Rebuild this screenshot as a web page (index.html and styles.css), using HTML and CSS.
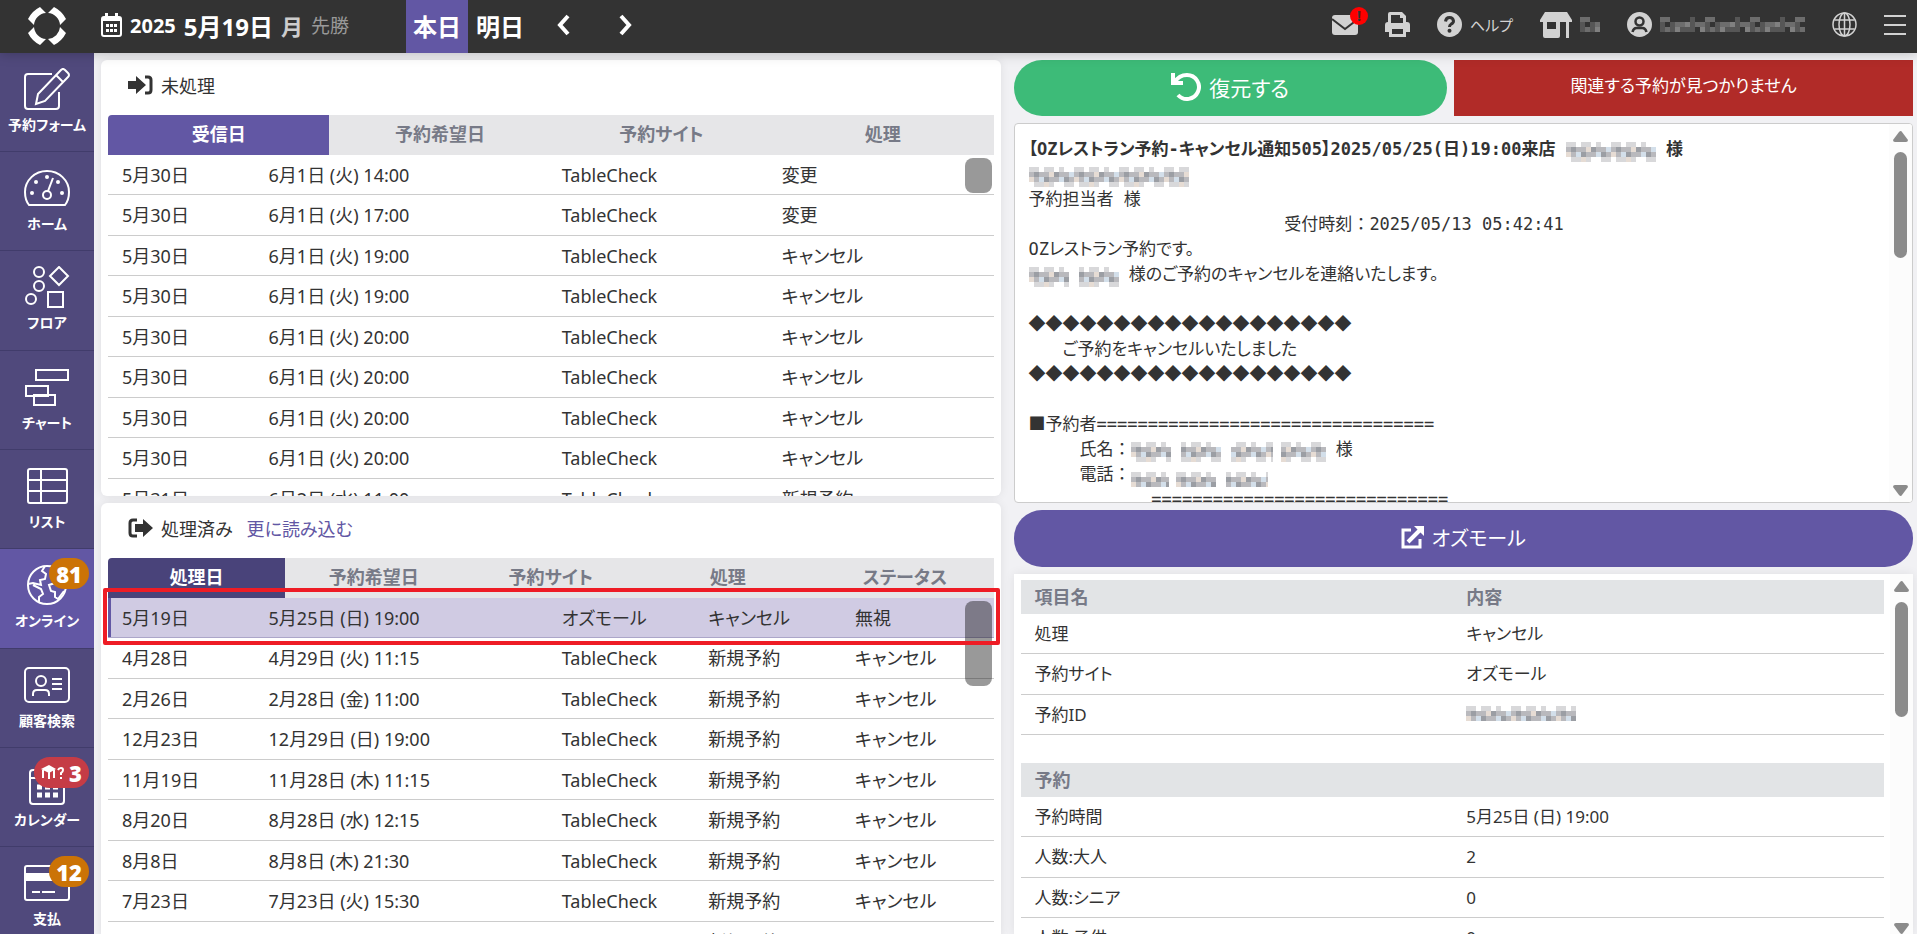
FILE: index.html
```
<!DOCTYPE html>
<html lang="ja">
<head>
  <meta charset="UTF-8">
  <meta name="viewport" content="width=device-width, initial-scale=1.0">
  <title>オンライン予約</title>
  <link rel="stylesheet" href="styles.css">
</head>
<body>
  <!-- Паттерны для скрытых имён -->
  <svg class="defs" width="0" height="0" aria-hidden="true">
    <defs>
      <pattern id="mosaicLight" width="45" height="20" patternUnits="userSpaceOnUse">
        <g fill="#d8d8da"><path d="M0 0h10v5H0zM15 0h10v5H15zM30 0h5v5h-5zM5 15h10v5H5zM20 15h5v5h-5zM35 15h10v5H35z"/></g>
        <g fill="#b9b9bd"><path d="M0 5h5v5H0zM10 5h10v5H10zM30 5h10v5H30zM5 10h5v5H5zM20 10h10v5H20zM40 10h5v5h-5z"/></g>
        <g fill="#9b9ea4"><path d="M5 5h5v5H5zM15 10h5v5h-5zM35 10h5v5h-5zM25 5h5v5h-5z"/></g>
        <path fill="#e6dcd4" d="M0 10h5v5H0zM20 5h5v5h-5zM15 15h5v5h-5z"/>
        <path fill="#d3dfea" d="M10 10h5v5h-5zM30 10h5v5h-5zM40 5h5v5h-5z"/>
      </pattern>
      <pattern id="mosaicDark" width="45" height="20" patternUnits="userSpaceOnUse">
        <path fill="#6d6d6d" d="M0 0h10v5H0zM15 5h10v5H15zM35 5h10v5H35zM5 10h5v5H5z"/>
        <path fill="#565656" d="M0 5h5v10H0zM10 5h5v10h-5zM20 10h15v5H20zM30 0h5v10h-5z"/>
        <path fill="#808080" d="M15 10h5v5h-5zM25 5h5v5h-5zM40 10h5v5h-5z"/>
      </pattern>
    </defs>
  </svg>

  <header class="topbar">
    <a class="logo" href="#" aria-label="TableCheck">
      <svg width="38" height="38" viewBox="0 0 38 38" fill="#fff">
        <path d="M12 0L18 6A13 13 0 0 0 6 18L0 12Q4 4 12 0Z"/>
        <path d="M26 0L20 6A13 13 0 0 1 32 18L38 12Q34 4 26 0Z"/>
        <path d="M12 38L18 32A13 13 0 0 1 6 20L0 26Q4 34 12 38Z"/>
        <path d="M26 38L20 32A13 13 0 0 0 32 20L38 26Q34 34 26 38Z"/>
      </svg>
    </a>
    <button class="date">
      <svg width="21" height="24" viewBox="0 0 21 24" fill="none" stroke="#fff" stroke-width="2">
        <rect x="1" y="4" width="19" height="19" rx="2"/>
        <path d="M1 6h19" stroke-width="4"/><path d="M5.500 0v5M15.500 0v5" stroke-width="3"/>
        <path d="M5 12.500h11M5 17.500h11" stroke-width="3" stroke-dasharray="3 1"/>
      </svg>
      <span class="year">2025</span>
      <span class="day">5月19日</span>
      <span class="weekday">月</span>
      <span class="rokuyo">先勝</span>
    </button>
    <nav class="day-nav">
      <button class="day-button active">本日</button>
      <button class="day-button">明日</button>
      <button class="arrow" aria-label="前の日">
        <svg width="14" height="22" viewBox="0 0 14 22" fill="none" stroke="#fff" stroke-width="4"><path d="M12 2L4 11l8 9"/></svg>
      </button>
      <button class="arrow" aria-label="次の日">
        <svg width="14" height="22" viewBox="0 0 14 22" fill="none" stroke="#fff" stroke-width="4"><path d="M2 2l8 9-8 9"/></svg>
      </button>
    </nav>
    <div class="tools">
      <a href="#" class="mail" aria-label="メール">
        <svg width="26" height="20" viewBox="0 0 26 20"><rect width="26" height="20" rx="3" fill="#d2d2d2"/><path d="M0 4l13 10L26 4" fill="none" stroke="#333" stroke-width="2"/></svg>
        <span class="alert">!</span>
      </a>
      <a href="#" aria-label="印刷">
        <svg width="25" height="25" viewBox="0 0 25 25"><path fill="#d2d2d2" d="M5 0h12l4 4v6h1q3 0 3 3v7h-4v5H4v-5H0v-7q0-3 3-3h0V2q0-2 2-2z"/><path fill="#333" d="M6 3h9v3h3v5H6zM7 17h11v5H7z"/></svg>
      </a>
      <a href="#">
        <svg width="25" height="25" viewBox="0 0 25 25"><circle cx="12.500" cy="12.500" r="12.500" fill="#d2d2d2"/><path d="M8.500 9.500q.5-4 4-4t4 3.500q0 2-2.500 3.200-1.500.8-1.500 2.800" fill="none" stroke="#333" stroke-width="3"/><circle cx="12.500" cy="18.700" r="2" fill="#333"/></svg>
        <span class="help">ヘルプ</span>
      </a>
      <a href="#" aria-label="店舗">
        <svg width="32" height="26" viewBox="0 0 32 26"><path fill="#d2d2d2" d="M5 0h22l5 8v2H0V8zM3 10h4v7h9v-7h4v14q0 2-2 2H5q-2 0-2-2zM26 10h3v16h-3z"/></svg>
        <svg width="20" height="15"><rect width="20" height="15" fill="url(#mosaicDark)"/></svg>
      </a>
      <a href="#" aria-label="アカウント">
        <svg width="25" height="25" viewBox="0 0 25 25"><circle cx="12.500" cy="12.500" r="12.500" fill="#d2d2d2"/><circle cx="12.500" cy="9.500" r="4" fill="none" stroke="#333" stroke-width="2.500"/><path d="M5.500 20q1-4 4-4h6q3 0 4 4" fill="none" stroke="#333" stroke-width="2.500"/></svg>
        <svg width="145" height="15"><rect width="145" height="15" fill="url(#mosaicDark)"/></svg>
      </a>
      <a href="#" aria-label="言語">
        <svg width="25" height="25" viewBox="0 0 25 25" fill="none" stroke="#d2d2d2" stroke-width="1.500"><circle cx="12.500" cy="12.500" r="11.500"/><ellipse cx="12.500" cy="12.500" rx="5.500" ry="11.500"/><path d="M12.500 1v23M2.500 8h20M2.500 17h20"/></svg>
      </a>
      <a href="#" aria-label="メニュー">
        <svg width="22" height="20" viewBox="0 0 22 20" stroke="#d2d2d2" stroke-width="2"><path d="M0 1h22M0 10h22M0 19h22"/></svg>
      </a>
    </div>
  </header>

  <div class="page">
    <nav class="sidebar">
      <a href="#">
        <svg width="46" height="42" viewBox="0 0 46 42" fill="none" stroke="#fff" stroke-width="2"><path d="M28 6H4Q1 6 1 9v29q0 3 3 3h28q3 0 3-3V24"/><path d="M12 36l2-10L37 2q2-2 4 0l3 3q2 2 0 4L21 33l-9 3zM32 7l7 7"/></svg>
        <span>予約フォーム</span>
      </a>
      <a href="#">
        <svg width="46" height="42" viewBox="0 0 46 42" fill="none" stroke="#fff" stroke-width="2"><path d="M5 38Q1 33 1 25a22 21 0 0 1 44 0q0 8-4 13z"/><circle cx="23" cy="28" r="4"/><path d="M24 24l5-13"/><g fill="#fff" stroke="none"><circle cx="23" cy="10" r="2"/><circle cx="12" cy="15" r="2"/><circle cx="34" cy="15" r="2"/><circle cx="8" cy="26" r="2"/><circle cx="38" cy="26" r="2"/></g></svg>
        <span>ホーム</span>
      </a>
      <a href="#">
        <svg width="46" height="42" viewBox="0 0 46 42" fill="none" stroke="#fff" stroke-width="2"><circle cx="15" cy="6" r="5"/><circle cx="15" cy="20" r="5"/><circle cx="7" cy="33" r="5"/><path d="M35 1l9 9-9 9-9-9z"/><rect x="24" y="26" width="15" height="15"/></svg>
        <span>フロア</span>
      </a>
      <a href="#">
        <svg width="46" height="42" viewBox="0 0 46 42" fill="none" stroke="#fff" stroke-width="2"><rect x="12" y="4" width="32" height="10"/><rect x="2" y="20" width="22" height="10"/><rect x="10" y="29" width="21" height="10"/></svg>
        <span>チャート</span>
      </a>
      <a href="#">
        <svg width="46" height="42" viewBox="0 0 46 42" fill="none" stroke="#fff" stroke-width="2"><rect x="4" y="4" width="39" height="34" rx="2"/><path d="M17 4v34M4 15h39M4 26h39"/></svg>
        <span>リスト</span>
      </a>
      <a href="#" class="active">
        <svg width="46" height="42" viewBox="0 0 46 42" fill="none" stroke="#fff" stroke-width="2"><circle cx="23" cy="21" r="19"/><path d="M21 2l-3 5 4 3-1 5-5 1 1 5-8-2-5 1M9 21l8 4 2 5-4 3v5M42 21l-8-3-9 3 2 6 4 1v5l3 2 6-8M31 4l-3 6 4 3 7-2"/></svg>
        <span>オンライン</span>
        <b class="count orange">81</b>
      </a>
      <a href="#">
        <svg width="46" height="42" viewBox="0 0 46 42" fill="none" stroke="#fff" stroke-width="2"><rect x="1" y="4" width="44" height="34" rx="4"/><circle cx="17" cy="17" r="5"/><path d="M9 32v-2q0-4 4-4h8q4 0 4 4v2M28 15h10M28 20h10M28 25h10"/></svg>
        <span>顧客検索</span>
      </a>
      <a href="#">
        <svg width="46" height="42" viewBox="0 0 46 42" fill="none" stroke="#fff" stroke-width="2"><rect x="6" y="7" width="34" height="34" rx="3"/><path d="M6 15h34M14 2v8M32 2v8"/><path d="M13 24h21M13 32h21" stroke-width="5" stroke-dasharray="5 3"/></svg>
        <span>カレンダー</span>
        <b class="count red"><svg width="24" height="16" viewBox="0 0 24 16"><path fill="#fff" d="M0 4l8-4 7 4-7 4zM1 5h2v8H1zM7 7h2v7H7zM12 5h2v8h-2z"/><path d="M17 5q1-2 3-2t2 2-2 3v2M20 12v2" fill="none" stroke="#fff" stroke-width="2"/></svg>3</b>
      </a>
      <a href="#">
        <svg width="46" height="42" viewBox="0 0 46 42" fill="none" stroke="#fff" stroke-width="2"><rect x="1" y="4" width="44" height="34" rx="2"/><path d="M1 15h44" stroke-width="8"/><path d="M8 30h8M18 30h13"/></svg>
        <span>支払</span>
        <b class="count orange">12</b>
      </a>
    </nav>

    <main class="content">
      <div class="lists">
        <section class="panel">
          <h2 class="panel-title">
            <svg width="25" height="20" viewBox="0 0 25 20"><path fill="#333" d="M0 6h8V1l10 9-10 9v-5H0z"/><path d="M17 2h3q3 0 3 3v10q0 3-3 3h-3" fill="none" stroke="#333" stroke-width="3"/></svg>
            未処理
          </h2>
          <table class="list pending">
            <thead>
              <tr><th class="sorted">受信日</th><th>予約希望日</th><th>予約サイト</th><th>処理</th></tr>
            </thead>
            <tbody>
              <tr><td>5月30日</td><td>6月1日 (火) 14:00</td><td>TableCheck</td><td>変更</td></tr>
              <tr><td>5月30日</td><td>6月1日 (火) 17:00</td><td>TableCheck</td><td>変更</td></tr>
              <tr><td>5月30日</td><td>6月1日 (火) 19:00</td><td>TableCheck</td><td>キャンセル</td></tr>
              <tr><td>5月30日</td><td>6月1日 (火) 19:00</td><td>TableCheck</td><td>キャンセル</td></tr>
              <tr><td>5月30日</td><td>6月1日 (火) 20:00</td><td>TableCheck</td><td>キャンセル</td></tr>
              <tr><td>5月30日</td><td>6月1日 (火) 20:00</td><td>TableCheck</td><td>キャンセル</td></tr>
              <tr><td>5月30日</td><td>6月1日 (火) 20:00</td><td>TableCheck</td><td>キャンセル</td></tr>
              <tr><td>5月30日</td><td>6月1日 (火) 20:00</td><td>TableCheck</td><td>キャンセル</td></tr>
              <tr><td>5月31日</td><td>6月2日 (水) 11:00</td><td>TableCheck</td><td>新規予約</td></tr>
            </tbody>
          </table>
          <div class="list-thumb short"></div>
        </section>

        <section class="panel">
          <h2 class="panel-title">
            <svg width="25" height="20" viewBox="0 0 25 20"><path fill="#333" d="M7 6h8V1l10 9-10 9v-5H7z"/><path d="M9 2H5Q2 2 2 5v10q0 3 3 3h4" fill="none" stroke="#333" stroke-width="3"/></svg>
            処理済み
            <a href="#">更に読み込む</a>
          </h2>
          <table class="list processed">
            <thead>
              <tr><th class="sorted">処理日</th><th>予約希望日</th><th>予約サイト</th><th>処理</th><th>ステータス</th></tr>
            </thead>
            <tbody>
              <tr class="selected"><td>5月19日</td><td>5月25日 (日) 19:00</td><td>オズモール</td><td>キャンセル</td><td>無視</td></tr>
              <tr><td>4月28日</td><td>4月29日 (火) 11:15</td><td>TableCheck</td><td>新規予約</td><td>キャンセル</td></tr>
              <tr><td>2月26日</td><td>2月28日 (金) 11:00</td><td>TableCheck</td><td>新規予約</td><td>キャンセル</td></tr>
              <tr><td>12月23日</td><td>12月29日 (日) 19:00</td><td>TableCheck</td><td>新規予約</td><td>キャンセル</td></tr>
              <tr><td>11月19日</td><td>11月28日 (木) 11:15</td><td>TableCheck</td><td>新規予約</td><td>キャンセル</td></tr>
              <tr><td>8月20日</td><td>8月28日 (水) 12:15</td><td>TableCheck</td><td>新規予約</td><td>キャンセル</td></tr>
              <tr><td>8月8日</td><td>8月8日 (木) 21:30</td><td>TableCheck</td><td>新規予約</td><td>キャンセル</td></tr>
              <tr><td>7月23日</td><td>7月23日 (火) 15:30</td><td>TableCheck</td><td>新規予約</td><td>キャンセル</td></tr>
              <tr><td>7月9日</td><td>7月9日 (火) 19:00</td><td>TableCheck</td><td>新規予約</td><td>キャンセル</td></tr>
            </tbody>
          </table>
          <div class="list-thumb"></div>
          <div class="highlight"></div>
        </section>
      </div>

      <div class="details">
        <div class="actions">
          <button class="pill green">
            <svg width="30" height="30" viewBox="0 0 30 30" fill="none" stroke="#fff" stroke-width="4"><path d="M2 1v10h10M4 10q4-7 12-7a12 12 0 1 1-9 20"/></svg>
            復元する
          </button>
          <div class="notice">関連する予約が見つかりません</div>
        </div>

        <div class="mail-box">
<pre><b>【OZレストラン予約-キャンセル通知505】2025/05/25(日)19:00来店 <svg width="90" height="20"><rect width="90" height="20" fill="url(#mosaicLight)"/></svg> 様</b>
<svg width="160" height="20"><rect width="160" height="20" fill="url(#mosaicLight)"/></svg>
予約担当者 様
                         受付時刻<span class="full">：</span>2025/05/13 05:42:41
OZレストラン予約です。
<svg width="90" height="20"><path d="M0 0h40v20H0zM50 0h40v20H50z" fill="url(#mosaicLight)"/></svg> 様のご予約のキャンセルを連絡いたします。

<span class="full">◆◆◆◆◆◆◆◆◆◆◆◆◆◆◆◆◆◆◆</span>
　　ご予約をキャンセルいたしました
<span class="full">◆◆◆◆◆◆◆◆◆◆◆◆◆◆◆◆◆◆◆</span>

<span class="full">■</span>予約者=================================
　　　氏名<span class="full">：</span><svg width="195" height="20"><path d="M0 0h40v20H0zM50 0h40v20H50zM100 0h42v20h-42zM150 0h45v20h-45z" fill="url(#mosaicLight)"/></svg> 様
　　　電話<span class="full">：</span><svg width="140" height="15"><path d="M0 0h38v15H0zM45 0h40v15H45zM95 0h42v15H95z" fill="url(#mosaicLight)"/></svg>
            =============================</pre>
          <div class="scrollbar">
            <svg width="15" height="11" viewBox="0 0 15 11"><path fill="#8b8b8b" d="M6 1q2-2 3 0l6 8q0 2-2 2H2q-2 0-2-2z"/></svg>
            <div class="thumb"></div>
            <svg width="15" height="11" viewBox="0 0 15 11"><path fill="#8b8b8b" d="M6 10q2 2 3 0l6-8q0-2-2-2H2Q0 0 0 2z"/></svg>
          </div>
        </div>

        <button class="pill purple">
          <svg width="23" height="23" viewBox="0 0 23 23" fill="none" stroke="#fff" stroke-width="3"><path d="M10 4H2v17h17v-8"/><path d="M7 16L19 4" stroke-width="4"/><path fill="#fff" stroke="none" d="M13 0h10v10z"/></svg>
          オズモール
        </button>

        <div class="info-box">
          <div class="info-tables">
            <table class="info">
              <thead><tr><th>項目名</th><th>内容</th></tr></thead>
              <tbody>
                <tr><td>処理</td><td>キャンセル</td></tr>
                <tr><td>予約サイト</td><td>オズモール</td></tr>
                <tr><td>予約ID</td><td><svg width="110" height="15"><rect width="110" height="15" fill="url(#mosaicLight)"/></svg></td></tr>
              </tbody>
            </table>
            <table class="info">
              <thead><tr><th colspan="2">予約</th></tr></thead>
              <tbody>
                <tr><td>予約時間</td><td class="time">5月25日 (日) 19:00</td></tr>
                <tr><td>人数:大人</td><td>2</td></tr>
                <tr><td>人数:シニア</td><td>0</td></tr>
                <tr><td>人数:子供</td><td>0</td></tr>
              </tbody>
            </table>
          </div>
          <div class="scrollbar">
            <svg width="15" height="11" viewBox="0 0 15 11"><path fill="#8b8b8b" d="M6 1q2-2 3 0l6 8q0 2-2 2H2q-2 0-2-2z"/></svg>
            <div class="thumb tall"></div>
            <svg width="15" height="11" viewBox="0 0 15 11"><path fill="#8b8b8b" d="M6 10q2 2 3 0l6-8q0-2-2-2H2Q0 0 0 2z"/></svg>
          </div>
        </div>
      </div>
    </main>
  </div>
</body>
</html>
```

FILE: styles.css
```
* {
  box-sizing: border-box;
}

body {
  display: flex;
  flex-direction: column;
  height: 100vh;
  margin: 0;
  overflow: hidden;
  font-family: "Noto Sans", "Noto Sans CJK JP", sans-serif;
  font-feature-settings: "palt";
  font-size: 18px;
  color: #333;
  background-color: #f1f1f4;
}

button {
  border: none;
  padding: 0;
  font-family: inherit;
  font-feature-settings: inherit;
  color: inherit;
  background: none;
  cursor: pointer;
}

a {
  color: inherit;
  text-decoration: none;
}

.defs {
  position: absolute;
}

/* Верхняя панель */
.topbar {
  display: flex;
  align-items: center;
  flex: none;
  height: 53px;
  background-color: #333;
  color: white;
  box-shadow: 0 0 12px rgba(0, 0, 0, 0.25);
  z-index: 2;
}

.logo {
  display: flex;
  justify-content: center;
  width: 94px;
  padding-bottom: 2px;
}

.date {
  display: flex;
  align-items: center;
  gap: 8px;
  width: 312px;
  height: 53px;
  padding-left: 7px;
  padding-bottom: 3px;
  font-weight: bold;
}

.year {
  font-size: 20px;
}

.day {
  font-size: 24px;
}

.weekday {
  font-size: 22px;
  color: #ccc;
}

.rokuyo {
  font-size: 19px;
  font-weight: normal;
  color: #999;
}

.day-nav {
  display: flex;
  gap: 1px;
  height: 100%;
}

.day-button {
  width: 62px;
  padding-bottom: 2px;
  font-size: 24px;
  font-weight: bold;
  color: white;
}

.day-button.active {
  background-color: #6257a4;
}

.arrow {
  width: 62px;
}

.tools {
  display: flex;
  align-items: center;
  gap: 27px;
  margin-left: auto;
  padding-right: 11px;
  padding-bottom: 4px;
  color: #d2d2d2;
}

.tools a {
  display: flex;
  align-items: center;
  gap: 8px;
}

.help {
  font-size: 15px;
}

.mail {
  position: relative;
}

.alert {
  position: absolute;
  top: -8px;
  right: -10px;
  width: 18px;
  height: 18px;
  border-radius: 50%;
  background-color: #ff0000;
  color: #333;
  font-size: 14px;
  font-weight: bold;
  line-height: 18px;
  text-align: center;
}

.page {
  display: flex;
  flex: 1;
  min-height: 0;
}

/* Боковое меню */
.sidebar {
  flex: none;
  width: 94px;
  overflow: hidden;
  background-color: #50497c;
}

.sidebar a {
  position: relative;
  display: flex;
  flex-direction: column;
  align-items: center;
  gap: 5px;
  height: 99px;
  padding-top: 15px;
  border-bottom: 1px solid #413c6b;
  color: white;
  font-size: 14px;
  font-weight: bold;
  line-height: 20px;
}

.sidebar a:nth-child(3n) {
  height: 100px;
}

.sidebar a.active {
  background-color: #6257a4;
}

.count {
  position: absolute;
  top: 9px;
  right: 5px;
  display: flex;
  align-items: center;
  gap: 4px;
  height: 31px;
  padding: 0 7px;
  border-radius: 16px;
  font-size: 22px;
}

.orange {
  background-color: #cb7306;
}

.red {
  background-color: #c53c46;
}

.content {
  display: grid;
  grid-template-columns: 1fr 1fr;
  gap: 13px;
  flex: 1;
  min-width: 0;
  padding: 7px 4px 0 7px;
}

/* Списки */
.lists {
  display: grid;
  grid-template-rows: 1fr 1fr;
  gap: 7px;
  min-height: 0;
  margin-bottom: -5px;
}

.panel {
  position: relative;
  min-height: 0;
  padding: 0 7px;
  overflow: hidden;
  border-radius: 6px;
  background-color: white;
  box-shadow: 0 0 10px rgba(0, 0, 0, 0.08);
}

.panel-title {
  display: flex;
  align-items: center;
  gap: 8px;
  height: 55px;
  margin: 0;
  padding: 0 20px 5px;
  font-size: 18px;
  font-weight: normal;
}

.panel-title a {
  margin-left: 6px;
  color: #6257a4;
}

.list, .list thead, .list tbody {
  display: block;
}

.list tr {
  display: grid;
  align-items: center;
}

.list th {
  height: 40px;
  padding: 0;
  line-height: 38px;
  color: #777a87;
  background-color: #e6e6e8;
}

.pending thead tr {
  grid-template-columns: repeat(4, 1fr);
}

.processed thead tr {
  grid-template-columns: repeat(5, 1fr);
}

.list th.sorted {
  color: white;
  background-color: #6257a4;
  border-top-left-radius: 4px;
}

.processed th.sorted {
  background-color: #49437a;
}

.list tbody tr {
  height: 40px;
  padding-right: 6px;
  border-bottom: 1px solid #ccc;
}

.list tbody tr:nth-child(even), .info tbody tr:nth-child(even) td {
  height: 41px;
}

.pending tbody tr {
  grid-template-columns: 2fr 4fr 3fr 3fr;
}

.processed tbody tr {
  grid-template-columns: 2fr 4fr 2fr 2fr 2fr;
}

.list td {
  padding: 0 0 0 14px;
  line-height: 24px;
}

/* даты без пропорциональной ширины */
.list td:nth-child(-n+2), .info .time {
  font-feature-settings: normal;
}

.list tbody tr.selected {
  background-color: #d0cbe3;
  border-bottom-color: #aca6c9;
  box-shadow: inset 3px 0 #6257a4;
}

.list-thumb {
  position: absolute;
  top: 98px;
  right: 9px;
  width: 27px;
  height: 85px;
  border-radius: 8px;
  background-color: rgba(0, 0, 0, 0.4);
}

.list-thumb.short {
  height: 35px;
}

.highlight {
  position: absolute;
  top: 85px;
  left: 2px;
  right: 1px;
  height: 57px;
  border: 4px solid #ee1c25;
  border-radius: 2px;
}

/* Правая часть */
.details {
  display: grid;
  grid-template-rows: auto 19fr auto 18fr;
  gap: 7px;
  min-height: 0;
  min-width: 0;
}

.actions {
  display: grid;
  grid-template-columns: 17fr 18fr;
  gap: 7px;
}

.pill {
  display: flex;
  align-items: center;
  justify-content: center;
  gap: 8px;
  height: 57px;
  padding-bottom: 3px;
  border-radius: 28px;
  color: white;
  font-size: 20px;
}

.green {
  height: 56px;
  font-size: 21px;
  background-color: #3dbb78;
}

.purple {
  background-color: #6257a4;
}

.notice {
  padding-bottom: 4px;
  font-size: 17px;
  line-height: 52px;
  text-align: center;
  color: white;
  background-color: #b12b28;
}

.mail-box {
  display: flex;
  min-height: 0;
  overflow: hidden;
  border: 1px solid #ccc;
  border-radius: 4px;
  background-color: white;
}

.mail-box pre {
  flex: 1;
  margin: 0;
  padding: 13px 14px;
  font-family: "DejaVu Sans Mono", "Noto Sans CJK JP", monospace;
  font-size: 17px;
  line-height: 25px;
}

.mail-box pre svg {
  vertical-align: -3px;
  margin: -4px 0;
}

.full {
  font-family: "Noto Sans CJK JP", sans-serif;
  font-feature-settings: normal;
  line-height: 1;
}

.scrollbar {
  display: flex;
  flex-direction: column;
  align-items: center;
  flex: none;
  gap: 10px;
  width: 23px;
  padding: 7px 0 6px;
  background-color: #fcfcfc;
}

.thumb {
  width: 13px;
  height: 106px;
  margin-bottom: auto;
  border-radius: 7px;
  background-color: #8b8b8b;
}

.thumb.tall {
  height: 115px;
}

.info-box {
  display: flex;
  min-height: 0;
  overflow: hidden;
  background-color: white;
  box-shadow: 0 0 10px rgba(0, 0, 0, 0.08);
}

.info-box .scrollbar {
  padding-bottom: 0;
}

.info-tables {
  flex: 1;
  padding: 6px 6px 0 7px;
}

.info {
  width: 100%;
  margin-bottom: 28px;
  border-spacing: 0;
  table-layout: fixed;
  font-size: 17px;
}

.info th {
  height: 34px;
  padding: 0 14px;
  font-size: 18px;
  line-height: 24px;
  text-align: left;
  color: #777a87;
  background-color: #e2e4e6;
}

.info td {
  height: 40px;
  padding: 0 14px;
  line-height: 24px;
  border-bottom: 1px solid #ccc;
}
```
